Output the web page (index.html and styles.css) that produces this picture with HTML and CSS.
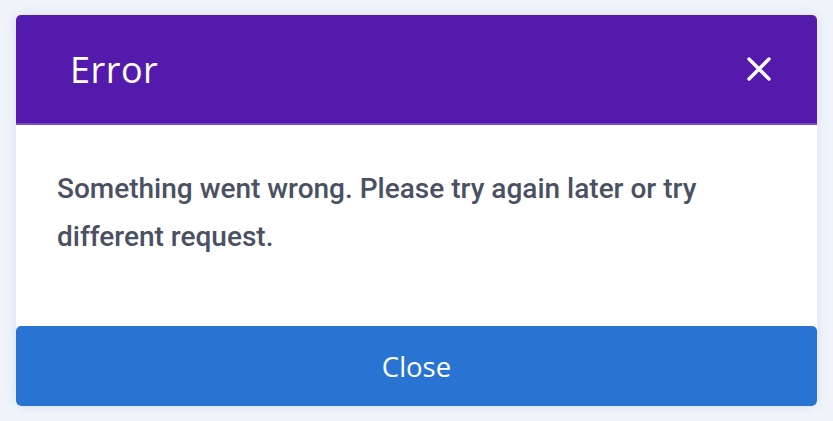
FILE: index.html
```html
<!DOCTYPE html>
<html lang="en">
<head>
  <meta charset="UTF-8" />
  <title>Error</title>
  <link rel="stylesheet" href="styles.css">
</head>
<body>
  <div class="dialog">
    <div class="dialog-header">
      <h2>Error</h2>
      <button class="close-x" aria-label="Close">
        <svg width="26" height="26" viewBox="0 0 26 26">
          <path d="M3 3 L23 23 M23 3 L3 23" stroke="#fff" stroke-width="3.4" stroke-linecap="round" />
        </svg>
      </button>
    </div>
    <div class="dialog-body">
      <p>Something went wrong. Please try again later or try different request.</p>
    </div>
    <button class="close-btn">Close</button>
  </div>
</body>
</html>
```

FILE: styles.css
```css
body {
  margin: 0;
  background: #f1f5fb;
  font-family: "Open Sans", sans-serif;
}
.dialog {
  margin: 15px 16px;
  width: 801px;
  height: 391px;
  display: flex;
  flex-direction: column;
  background: #fff;
  border-radius: 5px;
  box-shadow: 0 0 14px rgba(90, 130, 200, 0.18);
  overflow: hidden;
}
.dialog-header {
  height: 108px;
  background: #541aab;
  border-bottom: 2px solid #7a4ac4;
  display: flex;
  align-items: center;
  justify-content: space-between;
  padding: 0 45px 0 54px;
}
.dialog-header h2 {
  margin: 0;
  color: #fff;
  font-weight: 400;
  font-size: 36px;
  letter-spacing: 0.5px;
}
.close-x {
  background: none;
  border: 0;
  padding: 0;
  display: flex;
}
.dialog-body {
  flex: 1;
  padding: 40px 41px 20px;
}
.dialog-body p {
  margin: 0;
  font-family: Roboto, sans-serif;
  font-weight: 500;
  font-size: 28px;
  line-height: 48px;
  color: #4a5162;
  max-width: 690px;
}
.close-btn {
  height: 80px;
  border: 0;
  background: #2974d3;
  color: #fff;
  font-family: "Open Sans", sans-serif;
  font-size: 27.5px;
  border-radius: 5px;
}
```
